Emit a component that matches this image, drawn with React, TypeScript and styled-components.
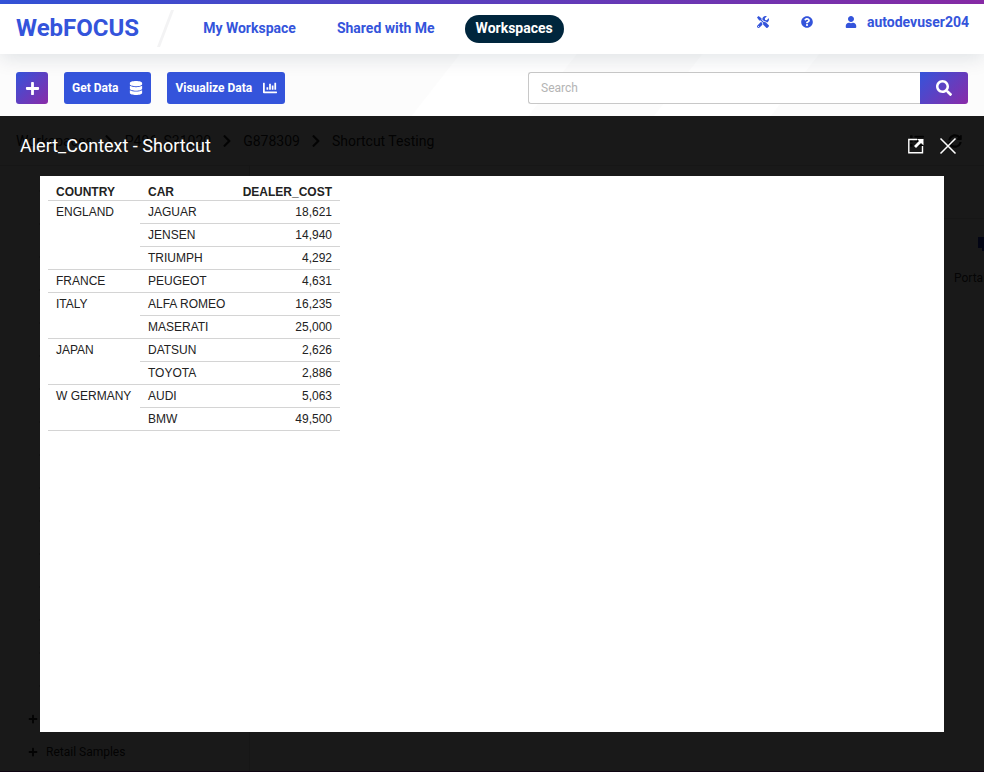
import React from "react";
import styled, { createGlobalStyle, css } from "styled-components";
import {
  FaChartBar,
  FaChevronRight,
  FaDatabase,
  FaList,
  FaPlus,
  FaQuestionCircle,
  FaSearch,
  FaSyncAlt,
  FaTools,
  FaUser,
} from "react-icons/fa";

const BLUE = "#3454db";
const PURPLE = "#8a2ba8";

const GlobalStyle = createGlobalStyle`
  *, *::before, *::after { box-sizing: border-box; }
  body {
    margin: 0;
    font-family: Roboto, "Liberation Sans", sans-serif;
    font-size: 14px;
    color: #000;
    background: #fff;
  }
  button, input { font-family: inherit; }
  button { cursor: pointer; }
`;

const Page = styled.div`
  display: flex;
  flex-direction: column;
  min-height: 100vh;
  overflow: hidden;
`;

const TopStripe = styled.div`
  height: 4px;
  background: linear-gradient(90deg, ${BLUE}, ${PURPLE});
`;

const Header = styled.header`
  position: relative;
  z-index: 1;
  display: flex;
  align-items: center;
  height: 50px;
  padding: 0 15px 0 16px;
  background: #fff;
  box-shadow: 0 4px 20px rgba(0, 30, 60, 0.12);
`;

const Logo = styled.a`
  padding-bottom: 2px;
  font-size: 24px;
  font-weight: 700;
  line-height: 28px;
  color: ${BLUE};
  text-decoration: none;
`;

const Slash = styled.svg`
  width: 18px;
  height: 38px;
  margin-left: 17px;
`;

const Nav = styled.nav`
  display: flex;
  gap: 19px;
  margin-left: 18px;
`;

const NavLink = styled.a<{ $active?: boolean }>`
  padding: 0 11px 2px;
  border-radius: 14px;
  font-weight: 700;
  line-height: 26px;
  white-space: nowrap;
  text-decoration: none;
  color: ${BLUE};
  ${(p) =>
    p.$active &&
    css`
      color: #fff;
      background: #00263d;
    `}
`;

const UserArea = styled.div`
  display: flex;
  align-items: center;
  align-self: flex-start;
  gap: 32px;
  height: 36px;
  margin-left: auto;
`;

const UserButton = styled.button`
  display: flex;
  align-items: center;
  gap: 10px;
  padding: 0;
  border: 0;
  background: none;
  font-size: 14px;
  font-weight: 700;
  color: ${BLUE};

  svg {
    width: 12px;
    height: 12px;
  }
`;

const Toolbar = styled.div`
  display: flex;
  gap: 16px;
  padding: 18px 16px 12px;
  background: linear-gradient(
    128deg,
    #fcfcfc 362px,
    #fff 363px,
    #fff 454px,
    #fcfcfc 455px,
    #fcfcfc 553px,
    #fff 554px,
    #fff 645px,
    #fcfcfc 646px
  );
`;

const ActionButton = styled.button<{ $square?: boolean }>`
  display: flex;
  align-items: center;
  justify-content: center;
  gap: 11px;
  height: 32px;
  padding: 0 8px;
  border: 0;
  border-radius: 3px;
  font-size: 12px;
  font-weight: 700;
  white-space: nowrap;
  color: #fff;
  background: ${BLUE};

  svg {
    width: 14px;
    height: 14px;
  }

  ${(p) =>
    p.$square &&
    css`
      width: 32px;
      background: linear-gradient(135deg, ${BLUE}, ${PURPLE});
      svg {
        width: 15px;
        height: 15px;
      }
    `}
`;

const SearchForm = styled.form`
  display: flex;
  flex: 0 1 440px;
  margin-left: auto;
`;

const SearchInput = styled.input`
  flex: 1;
  min-width: 0;
  height: 32px;
  padding: 0 12px;
  border: 1px solid #c8c8c8;
  border-right: 0;
  border-radius: 3px 0 0 3px;
  font-size: 12px;
  background: #fff;

  &::placeholder {
    color: #b4b4b4;
    opacity: 1;
  }
`;

const SearchButton = styled.button`
  display: flex;
  align-items: center;
  justify-content: center;
  width: 48px;
  border: 0;
  border-radius: 0 3px 3px 0;
  color: #fff;
  background: linear-gradient(135deg, ${BLUE}, ${PURPLE});

  svg {
    width: 16px;
    height: 16px;
  }
`;

const Stage = styled.main`
  position: relative;
  display: flex;
  flex: 1;
  flex-direction: column;
`;

const PathBar = styled.div`
  display: flex;
  align-items: center;
  gap: 10px;
  height: 50px;
  padding: 0 22px 0 16px;
  border-bottom: 1px solid #e2e2e2;
  white-space: nowrap;
  color: #222;

  svg {
    width: 12px;
    height: 14px;
  }
`;

const PathTools = styled.div`
  display: flex;
  gap: 24px;
  margin-left: auto;

  svg {
    width: 14px;
  }
`;

const Body = styled.div`
  display: flex;
  flex: 1;
`;

const Tree = styled.ul`
  width: 250px;
  margin: 0;
  padding: 8px 28px 0;
  list-style: none;
  border-right: 1px solid #e2e2e2;
  font-size: 12px;
  color: #222;
`;

const TreeRow = styled.li<{ $nested?: boolean }>`
  display: flex;
  align-items: center;
  gap: 8px;
  height: 33px;
  padding-left: ${(p) => (p.$nested ? 11 : 0)}px;

  svg {
    width: 10px;
    height: 10px;
  }
`;

const Content = styled.section`
  flex: 1;
  margin-top: 52px;
  border-top: 1px solid #e2e2e2;
`;

const Tile = styled.div`
  display: flex;
  flex-direction: column;
  gap: 20px;
  width: 62px;
  margin: 18px -32px 0 auto;
  font-size: 12px;
  color: #333;
`;

const FolderMark = styled.svg`
  width: 14px;
  height: 14px;
  margin-left: 24px;
`;

const FooterStripe = styled.div`
  height: 1px;
  background: ${PURPLE};
`;

const Overlay = styled.section`
  position: absolute;
  inset: 0;
  display: flex;
  flex-direction: column;
  padding: 0 40px 40px;
  background: rgba(0, 0, 0, 0.9);
`;

const OverlayHeader = styled.div`
  display: flex;
  align-items: center;
  gap: 12px;
  height: 60px;
  margin: 0 -14px 0 -20px;
`;

const OverlayTitle = styled.h1`
  flex: 1;
  margin: 0;
  padding-bottom: 2px;
  font-size: 18px;
  font-weight: 400;
  color: #fff;
`;

const IconButton = styled.button`
  display: flex;
  padding: 0;
  border: 0;
  background: none;
  color: #fff;

  svg {
    width: 20px;
    height: 20px;
  }
`;

const Report = styled.div`
  flex: 1;
  padding: 6px 8px;
  background: #fff;
`;

const ReportTable = styled.table`
  width: 292px;
  table-layout: fixed;
  border-collapse: separate;
  border-spacing: 0;
  font-family: Arial, "Liberation Sans", sans-serif;
  font-size: 12px;
  line-height: 18px;
  color: #222;
`;

const HeadCell = styled.th<{ $width?: number; $right?: boolean }>`
  width: ${(p) => (p.$width ? `${p.$width}px` : "auto")};
  padding: 2px 8px 0;
  line-height: 16px;
  border-bottom: 1px solid #d4d4d4;
  text-align: ${(p) => (p.$right ? "right" : "left")};
`;

const Cell = styled.td<{ $right?: boolean }>`
  padding: 2px 8px;
  border-bottom: 1px solid #d4d4d4;
  vertical-align: top;
  white-space: nowrap;
  text-align: ${(p) => (p.$right ? "right" : "left")};
`;

const groups: { country: string; cars: [string, string][] }[] = [
  { country: "ENGLAND", cars: [["JAGUAR", "18,621"], ["JENSEN", "14,940"], ["TRIUMPH", "4,292"]] },
  { country: "FRANCE", cars: [["PEUGEOT", "4,631"]] },
  { country: "ITALY", cars: [["ALFA ROMEO", "16,235"], ["MASERATI", "25,000"]] },
  { country: "JAPAN", cars: [["DATSUN", "2,626"], ["TOYOTA", "2,886"]] },
  { country: "W GERMANY", cars: [["AUDI", "5,063"], ["BMW", "49,500"]] },
];

const path = ["Workspaces", "P496_S31020", "G878309", "Shortcut Testing"];

export default function App() {
  return (
    <>
      <GlobalStyle />
      <Page>
        <TopStripe />
        <Header>
          <Logo href="#">WebFOCUS</Logo>
          <Slash viewBox="0 0 18 38" aria-hidden="true">
            <path d="M15 0h3L4 37H1z" fill="#f3f3f4" />
          </Slash>
          <Nav>
            <NavLink href="#">My Workspace</NavLink>
            <NavLink href="#">Shared with Me</NavLink>
            <NavLink href="#" $active>Workspaces</NavLink>
          </Nav>
          <UserArea>
            <UserButton aria-label="Settings"><FaTools /></UserButton>
            <UserButton aria-label="Help"><FaQuestionCircle /></UserButton>
            <UserButton><FaUser />autodevuser204</UserButton>
          </UserArea>
        </Header>
        <Toolbar>
          <ActionButton $square aria-label="Add"><FaPlus /></ActionButton>
          <ActionButton>Get Data<FaDatabase /></ActionButton>
          <ActionButton>Visualize Data<FaChartBar /></ActionButton>
          <SearchForm role="search" onSubmit={(e) => e.preventDefault()}>
            <SearchInput type="text" placeholder="Search" aria-label="Search" />
            <SearchButton aria-label="Run search"><FaSearch /></SearchButton>
          </SearchForm>
        </Toolbar>
        <Stage>
          <PathBar>
            {path.map((item, i) => (
              <React.Fragment key={item}>
                {i > 0 && <FaChevronRight />}
                <span>{item}</span>
              </React.Fragment>
            ))}
            <PathTools><FaList /><FaSyncAlt /></PathTools>
          </PathBar>
          <Body>
            <Tree>
              {Array.from({ length: 16 }, (_, i) => (
                <TreeRow key={i} $nested><FaPlus /></TreeRow>
              ))}
              <TreeRow><FaPlus /></TreeRow>
              <TreeRow><FaPlus />Retail Samples</TreeRow>
            </Tree>
            <Content>
              <Tile>
                <FolderMark viewBox="0 0 14 14" aria-hidden="true">
                  <path d="M0 0h14v14H4v-3H0z" fill="#2233cc" />
                </FolderMark>
                <span>Portals</span>
              </Tile>
            </Content>
          </Body>
          <FooterStripe />
          <Overlay role="dialog" aria-label="Alert_Context - Shortcut">
            <OverlayHeader>
              <OverlayTitle>Alert_Context - Shortcut</OverlayTitle>
              <IconButton aria-label="Open in new window">
                <svg viewBox="0 0 20 20" fill="none" stroke="currentColor" aria-hidden="true">
                  <path d="M11 3.5H2.8v13.2h13.7V10" strokeWidth="1.4" />
                  <path d="M9 11l5.5-5.5" strokeWidth="2.8" />
                  <path d="M11 3h6.500v6.500z" fill="currentColor" stroke="none" />
                </svg>
              </IconButton>
              <IconButton aria-label="Close">
                <svg viewBox="0 0 20 20" fill="none" stroke="currentColor" aria-hidden="true">
                  <path d="M2.500 2.500l15 15M17.500 2.500l-15 15" strokeWidth="1.500" />
                </svg>
              </IconButton>
            </OverlayHeader>
            <Report>
              <ReportTable>
                <thead>
                  <tr>
                    <HeadCell $width={92}>COUNTRY</HeadCell>
                    <HeadCell $width={92}>CAR</HeadCell>
                    <HeadCell $right>DEALER_COST</HeadCell>
                  </tr>
                </thead>
                <tbody>
                  {groups.map((g) =>
                    g.cars.map(([car, cost], i) => (
                      <tr key={car}>
                        {i === 0 && <Cell rowSpan={g.cars.length}>{g.country}</Cell>}
                        <Cell>{car}</Cell>
                        <Cell $right>{cost}</Cell>
                      </tr>
                    ))
                  )}
                </tbody>
              </ReportTable>
            </Report>
          </Overlay>
        </Stage>
      </Page>
    </>
  );
}
